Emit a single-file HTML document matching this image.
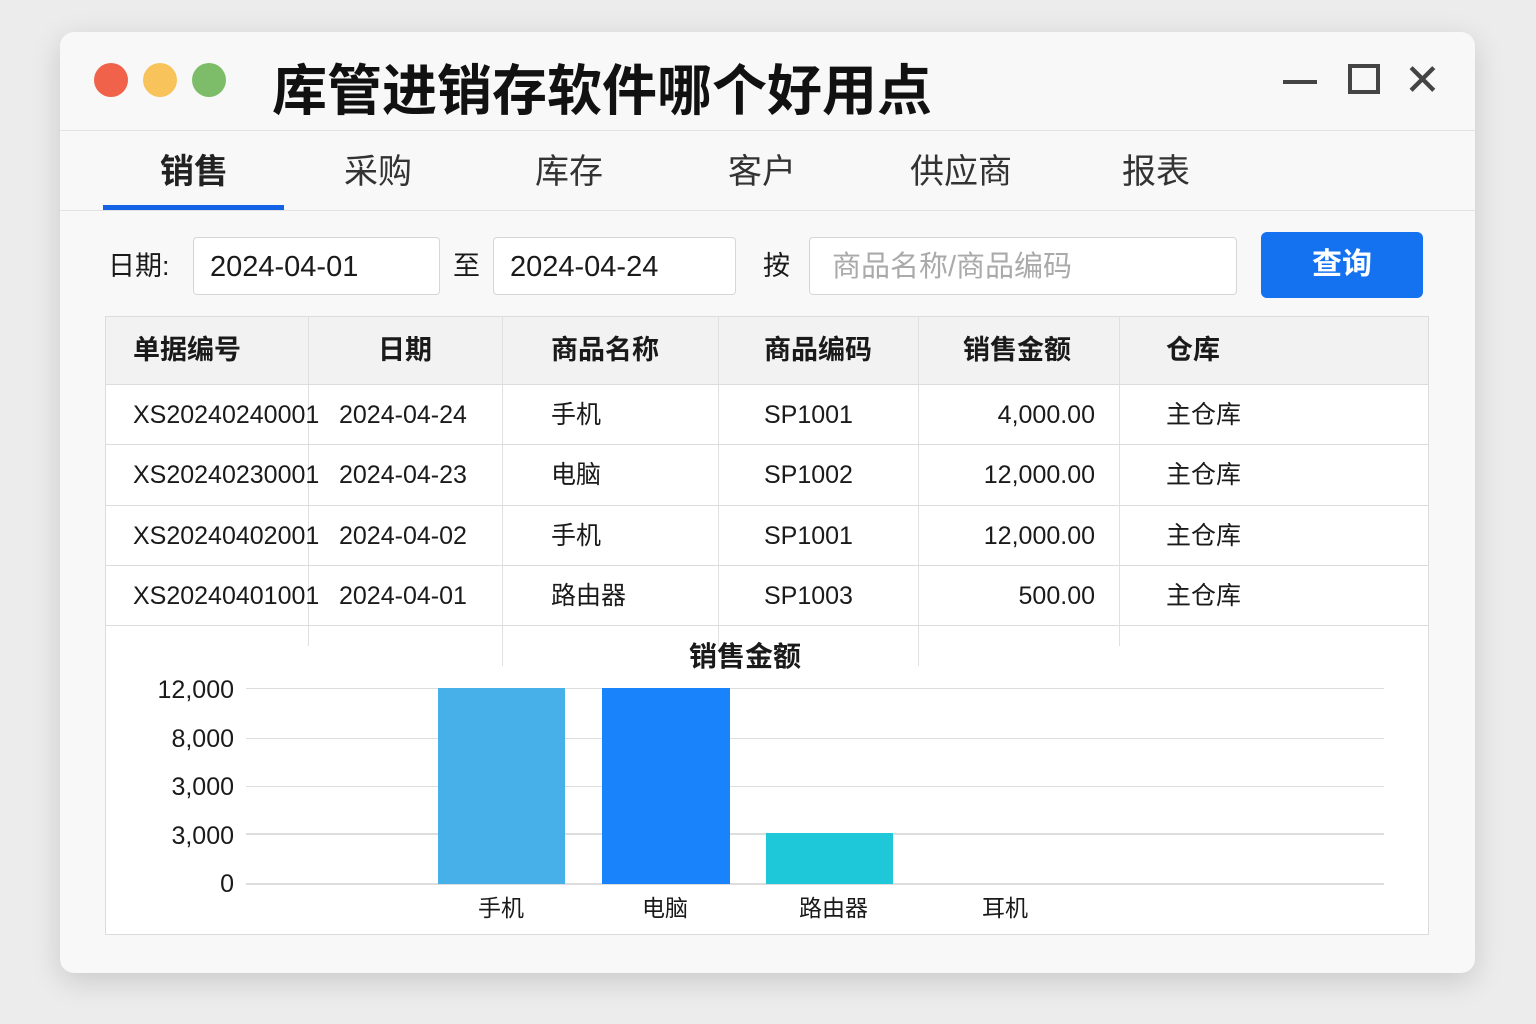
<!DOCTYPE html>
<html><head><meta charset="utf-8"><style>
*{margin:0;padding:0;box-sizing:border-box}
body{width:1536px;height:1024px;background:#ececec;font-family:"Liberation Sans","Noto Sans CJK SC",sans-serif;position:relative;overflow:hidden;color:#1a1a1a}
.a{position:absolute}
.win{left:60px;top:32px;width:1415px;height:941px;background:#f8f8f8;border-radius:14px;box-shadow:0 8px 30px rgba(0,0,0,.15)}
.dot{width:34px;height:34px;border-radius:50%;top:63px}
.tab{top:150px;font-size:34px;color:#333;line-height:44px}
.inp{background:#fff;border:1px solid #d6d6d6;border-radius:4px;height:58px;top:237px;font-size:29px;line-height:58px;padding:0 0 0 16px}
.row{left:106px;width:1322px;height:60px;line-height:60px;font-size:25px}
.row span{position:absolute;top:0}
.hd{font-size:27px;font-weight:bold;top:317px;line-height:67px}
.hl{height:1px;background:#dcdcdc;left:105px;width:1324px}
.vl{width:1px;background:#e0e0e0;top:316px}
.yl{font-size:25px;text-align:right;width:100px;left:134px;line-height:30px}
.gl{height:1px;background:#ddd;left:246px;width:1138px}
.lb{font-size:27px;top:237px;line-height:58px}
.xl{font-size:23px;top:893px;line-height:30px}
</style></head><body>
<div class="a win"></div>
<div class="a dot" style="left:94px;background:#f0624a"></div>
<div class="a dot" style="left:143px;background:#f7c35a"></div>
<div class="a dot" style="left:192px;background:#7dbd6a"></div>
<div class="a" style="left:272px;top:56px;font-size:55px;line-height:70px;font-weight:bold;color:#111">库管进销存软件哪个好用点</div>
<div class="a" style="left:1283px;top:80px;width:34px;height:4px;background:#444"></div>
<div class="a" style="left:1348px;top:64px;width:32px;height:30px;border:4px solid #444"></div>
<div class="a" style="left:1404px;top:56px;font-size:44px;line-height:50px;color:#444">✕</div>
<div class="a" style="left:60px;top:130px;width:1415px;height:1px;background:#e2e2e2"></div>
<div class="a tab" style="left:160px;font-weight:bold;color:#222">销售</div>
<div class="a tab" style="left:344px">采购</div>
<div class="a tab" style="left:535px">库存</div>
<div class="a tab" style="left:728px">客户</div>
<div class="a tab" style="left:910px">供应商</div>
<div class="a tab" style="left:1122px">报表</div>
<div class="a" style="left:60px;top:210px;width:1415px;height:1px;background:#e2e2e2"></div>
<div class="a" style="left:103px;top:205px;width:181px;height:5px;background:#1463e6"></div>
<div class="a lb" style="left:108px">日期:</div>
<div class="a inp" style="left:193px;width:247px">2024-04-01</div>
<div class="a lb" style="left:453px">至</div>
<div class="a inp" style="left:493px;width:243px">2024-04-24</div>
<div class="a lb" style="left:763px">按</div>
<div class="a inp" style="left:809px;width:428px;color:#aaa;padding-left:22px">商品名称/商品编码</div>
<div class="a" style="left:1261px;top:232px;width:162px;height:66px;background:#1472f0;border-radius:6px;color:#fff;font-size:30px;font-weight:bold;text-align:center;line-height:66px">查询</div>
<div class="a" style="left:105px;top:316px;width:1324px;height:619px;background:#fff;border:1px solid #dcdcdc"></div>
<div class="a" style="left:106px;top:317px;width:1322px;height:67px;background:#f2f2f2"></div>
<div class="a vl" style="left:308px;height:330px"></div>
<div class="a vl" style="left:502px;height:350px"></div>
<div class="a vl" style="left:718px;height:330px"></div>
<div class="a vl" style="left:918px;height:350px"></div>
<div class="a vl" style="left:1119px;height:330px"></div>
<div class="a hl" style="top:384px"></div><div class="a hl" style="top:444px"></div><div class="a hl" style="top:505px"></div><div class="a hl" style="top:565px"></div><div class="a hl" style="top:625px"></div>
<div class="a hd" style="left:133px">单据编号</div><div class="a hd" style="left:378px">日期</div><div class="a hd" style="left:551px">商品名称</div><div class="a hd" style="left:764px">商品编码</div><div class="a hd" style="left:963px">销售金额</div><div class="a hd" style="left:1166px">仓库</div>
<div class="a row" style="top:385px"><span style="left:27px">XS20240240001</span><span style="left:233px">2024-04-24</span><span style="left:445px">手机</span><span style="left:658px">SP1001</span><span style="right:333px">4,000.00</span><span style="left:1060px">主仓库</span></div>
<div class="a row" style="top:445px"><span style="left:27px">XS20240230001</span><span style="left:233px">2024-04-23</span><span style="left:445px">电脑</span><span style="left:658px">SP1002</span><span style="right:333px">12,000.00</span><span style="left:1060px">主仓库</span></div>
<div class="a row" style="top:506px"><span style="left:27px">XS20240402001</span><span style="left:233px">2024-04-02</span><span style="left:445px">手机</span><span style="left:658px">SP1001</span><span style="right:333px">12,000.00</span><span style="left:1060px">主仓库</span></div>
<div class="a row" style="top:566px"><span style="left:27px">XS20240401001</span><span style="left:233px">2024-04-01</span><span style="left:445px">路由器</span><span style="left:658px">SP1003</span><span style="right:333px">500.00</span><span style="left:1060px">主仓库</span></div>
<div class="a" style="left:689px;top:640px;font-size:28px;line-height:34px;font-weight:bold">销售金额</div>
<div class="a gl" style="top:688px"></div><div class="a gl" style="top:738px"></div><div class="a gl" style="top:786px"></div><div class="a gl" style="top:833px;height:2px"></div><div class="a gl" style="top:883px;height:2px"></div>
<div class="a yl" style="top:675px">12,000</div><div class="a yl" style="top:724px">8,000</div><div class="a yl" style="top:772px">3,000</div><div class="a yl" style="top:821px">3,000</div><div class="a yl" style="top:869px">0</div>
<div class="a" style="left:438px;top:688px;width:127px;height:196px;background:#47b0e8"></div>
<div class="a" style="left:602px;top:688px;width:128px;height:196px;background:#1883fb"></div>
<div class="a" style="left:766px;top:833px;width:127px;height:51px;background:#1fc8d8"></div>
<div class="a xl" style="left:478px">手机</div>
<div class="a xl" style="left:642px">电脑</div>
<div class="a xl" style="left:799px">路由器</div>
<div class="a xl" style="left:982px">耳机</div>
</body></html>
